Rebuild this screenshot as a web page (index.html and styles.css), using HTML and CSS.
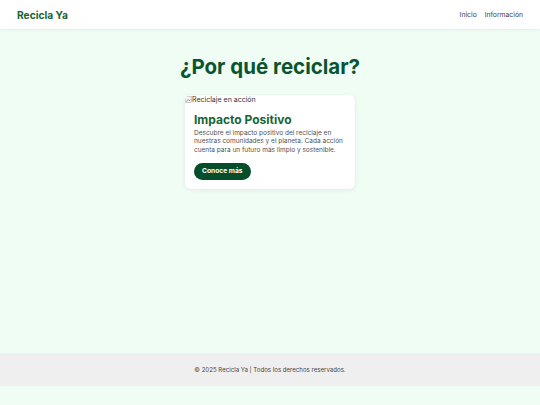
FILE: index.html
```html
<!DOCTYPE html>
<html lang="es">
<head>
<meta charset="utf-8">
<title>Recicla Ya</title>
<link rel="stylesheet" href="styles.css">
</head>
<body>
<header class="site-header">
  <div class="logo">Recicla Ya</div>
  <nav class="nav">
    <a href="#">Inicio</a>
    <a href="#">Información</a>
  </nav>
</header>
<main class="main">
  <h1 class="title">¿Por qué reciclar?</h1>
  <div class="card">
    <div class="img-alt"><svg class="broken" viewBox="0 0 8 8" width="7" height="7"><rect x="0.5" y="0.5" width="7" height="7" fill="#f2f2f2" stroke="#aaa" stroke-width="0.6"/><path d="M1.5 6.5 L3.5 4 L5 5.5 L6.5 3.5" fill="none" stroke="#6a9a5a" stroke-width="0.8"/></svg>Reciclaje en acción</div>
    <div class="card-body">
      <h2 class="card-title">Impacto Positivo</h2>
      <p class="card-text">Descubre el impacto positivo del reciclaje en nuestras comunidades y el planeta. Cada acción cuenta para un futuro más limpio y sostenible.</p>
      <a class="btn" href="#">Conoce más</a>
    </div>
  </div>
</main>
<footer class="footer">© 2025 Recicla Ya | Todos los derechos reservados.</footer>
</body>
</html>
```
FILE: styles.css
```css
* { box-sizing: border-box; }
html, body { margin: 0; padding: 0; }
body {
  background: #f0fdf4;
  font-family: Inter, "Noto Sans", sans-serif;
  min-height: 405px;
}
.site-header {
  height: 29px;
  background: #fff;
  box-shadow: 0 1px 3px rgba(0,0,0,0.06);
  display: flex;
  align-items: center;
  justify-content: space-between;
  padding: 0 17px;
}
.logo {
  font-weight: 700;
  font-size: 10.2px;
  color: #166534;
}
.nav { display: flex; gap: 8px; }
.nav a {
  font-size: 6.8px;
  color: #444;
  text-decoration: none;
}
.main {
  height: 324px;
  display: flex;
  flex-direction: column;
  align-items: center;
  padding-top: 24px;
}
.title {
  margin: 0;
  font-size: 20.5px;
  font-weight: 700;
  color: #0a5530;
  line-height: 28px;
}
.card {
  margin-top: 14px;
  width: 170px;
  background: #fff;
  border-radius: 6px;
  box-shadow: 0 1px 4px rgba(0,0,0,0.08);
  overflow: hidden;
}
.img-alt {
  font-size: 7px;
  color: #333;
  line-height: 9px;
  display: flex;
  align-items: center;
  height: 9px;
}
.card-body { padding: 8px 9px 9px; }
.card-title {
  margin: 0 0 1px;
  font-size: 12px;
  font-weight: 700;
  color: #166534;
  line-height: 16px;
}
.card-text {
  margin: 0 0 3px;
  font-size: 6.5px;
  line-height: 8.4px;
  color: #505050;
}
.btn {
  display: inline-block;
  background: #064e2b;
  color: #fff;
  font-weight: 700;
  font-size: 6.7px;
  line-height: 17px;
  padding: 0 8px;
  border-radius: 9px;
  text-decoration: none;
}
.footer {
  height: 33px;
  background: #efefef;
  display: flex;
  align-items: center;
  justify-content: center;
  font-size: 6.1px;
  color: #444;
}
```
